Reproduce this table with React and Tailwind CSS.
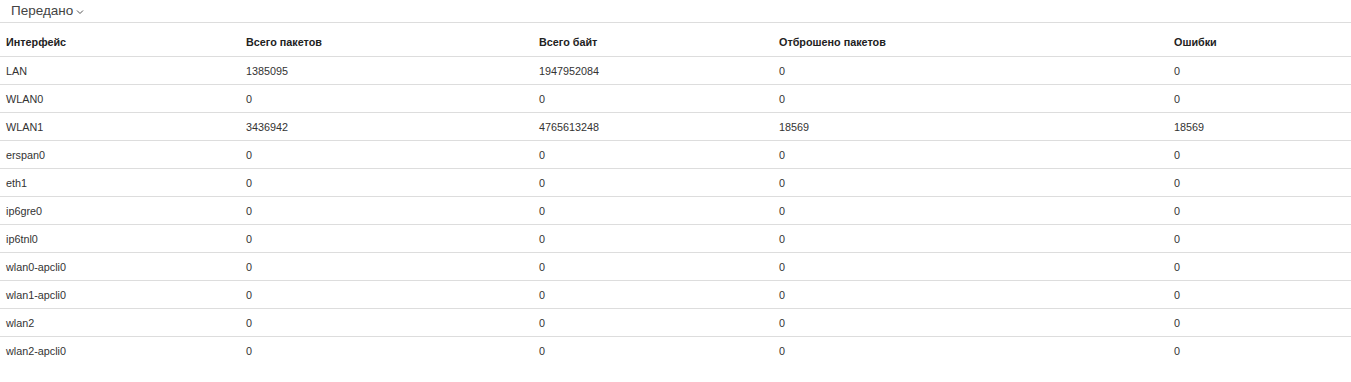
import React from 'react';

const rows = [
  ['LAN', '1385095', '1947952084', '0', '0'],
  ['WLAN0', '0', '0', '0', '0'],
  ['WLAN1', '3436942', '4765613248', '18569', '18569'],
  ['erspan0', '0', '0', '0', '0'],
  ['eth1', '0', '0', '0', '0'],
  ['ip6gre0', '0', '0', '0', '0'],
  ['ip6tnl0', '0', '0', '0', '0'],
  ['wlan0-apcli0', '0', '0', '0', '0'],
  ['wlan1-apcli0', '0', '0', '0', '0'],
  ['wlan2', '0', '0', '0', '0'],
  ['wlan2-apcli0', '0', '0', '0', '0'],
];

const headers = ['Интерфейс', 'Всего пакетов', 'Всего байт', 'Отброшено пакетов', 'Ошибки'];

const cols = 'grid grid-cols-[240px_293px_240px_395px_1fr]';

export default function App() {
  return (
    <div className="w-[1351px] h-[382px] bg-white text-[#333] font-['Liberation_Sans',Arial,sans-serif]">
      <div className="h-[22px] pl-[11px] flex items-center gap-[3px] text-[13.5px] text-[#444] leading-none">
        <span>Передано</span>
        <svg width="8" height="6" viewBox="0 0 8 6" className="mt-[2px]">
          <path d="M1 1.5 L4 4.5 L7 1.5" fill="none" stroke="#555" strokeWidth="1" />
        </svg>
      </div>

      <div className={`${cols} border-t border-b border-[#ddd] pt-[12px] pb-[7px] text-[10.8px] leading-[14px] font-bold text-[#222]`}>
        {headers.map((h) => (
          <div key={h} className="px-[6px]">{h}</div>
        ))}
      </div>

      {rows.map((r, i) => (
        <div
          key={r[0]}
          className={`${cols} h-[28px] items-center text-[10.8px] leading-[14px] ${i < rows.length - 1 ? 'border-b border-[#ddd]' : ''}`}
        >
          {r.map((c, j) => (
            <div key={j} className="px-[6px]">{c}</div>
          ))}
        </div>
      ))}
    </div>
  );
}
